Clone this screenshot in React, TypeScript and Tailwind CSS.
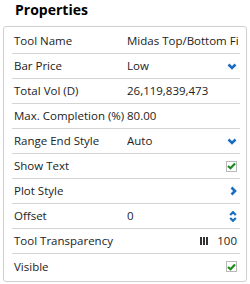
import React from 'react';

const ChevronDown = () => (
  <svg width="10" height="7" viewBox="0 0 10 7" className="shrink-0">
    <polyline points="1.5,1.5 5,5 8.5,1.5" fill="none" stroke="#1a6dc0" strokeWidth="2.6" />
  </svg>
);

const ChevronRight = () => (
  <svg width="7" height="10" viewBox="0 0 7 10" className="shrink-0">
    <polyline points="1.5,1.5 5,5 1.5,8.5" fill="none" stroke="#1a6dc0" strokeWidth="2.6" />
  </svg>
);

const Spinner = () => (
  <svg width="8" height="11" viewBox="0 0 8 11" className="shrink-0">
    <polyline points="1.2,4 4,1.2 6.8,4" fill="none" stroke="#1a6dc0" strokeWidth="2.2" />
    <polyline points="1.2,7 4,9.8 6.8,7" fill="none" stroke="#1a6dc0" strokeWidth="2.2" />
  </svg>
);

const Check = () => (
  <div className="w-[11px] h-[11px] border border-[#b9b9b9] bg-white flex items-center justify-center shrink-0">
    <svg width="9" height="8" viewBox="0 0 9 8">
      <polyline points="1,4 3.5,6.3 8,1.5" fill="none" stroke="#1c8c1c" strokeWidth="2.2" />
    </svg>
  </div>
);

const Bars = () => (
  <div className="flex gap-[1px] h-[8px] mr-[9px]">
    <div className="w-[2px] bg-[#333]" />
    <div className="w-[2px] bg-[#333]" />
    <div className="w-[2px] bg-[#333]" />
  </div>
);

type Row = { label: string; value?: string; right?: React.ReactNode };

const rows: Row[] = [
  { label: 'Tool Name', value: 'Midas Top/Bottom Finder' },
  { label: 'Bar Price', value: 'Low', right: <ChevronDown /> },
  { label: 'Total Vol (D)', value: '26,119,839,473' },
  { label: 'Max. Completion (%)', value: '80.00' },
  { label: 'Range End Style', value: 'Auto', right: <ChevronDown /> },
  { label: 'Show Text', right: <Check /> },
  { label: 'Plot Style', right: <ChevronRight /> },
  { label: 'Offset', value: '0', right: <Spinner /> },
  {
    label: 'Tool Transparency',
    right: (
      <div className="flex items-center">
        <Bars />
        <span>100</span>
      </div>
    ),
  },
  { label: 'Visible', right: <Check /> },
];

export default function App() {
  return (
    <div className="w-[250px] h-[284px] bg-white text-[#222] font-['Open_Sans',sans-serif] text-[11.5px]">
      <h1 className="pl-[15px] pt-0 h-[26px] text-[14px] font-bold leading-[20px] text-black">Properties</h1>
      <div className="mx-[3px] w-[244px] border border-[#cfcfcf] rounded-[3px] pl-[8px] pr-[6px] py-[2px]">
        {rows.map((r, i) => (
          <div
            key={r.label}
            className={`flex items-center h-[25px] px-[2px] ${i < rows.length - 1 ? 'border-b border-[#d4d4d4]' : ''}`}
          >
            <div className="w-[113px] shrink-0 whitespace-nowrap">{r.label}</div>
            <div className="flex-1 overflow-hidden whitespace-nowrap">{r.value}</div>
            {r.right && <div className="flex items-center ml-1 pr-[1px]">{r.right}</div>}
          </div>
        ))}
      </div>
    </div>
  );
}
